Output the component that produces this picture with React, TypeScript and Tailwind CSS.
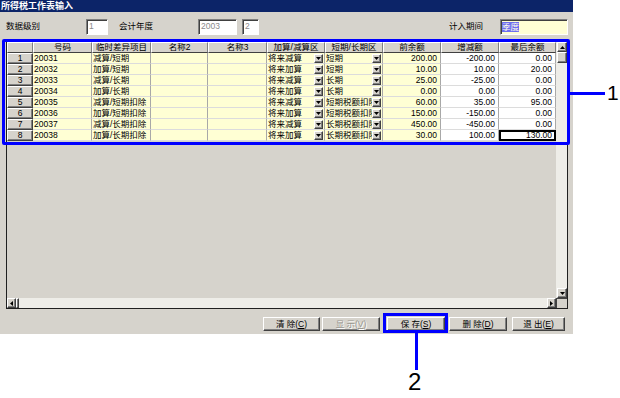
import React from "react";

const FONT = "font-['Liberation_Sans','Noto_Sans_CJK_SC',sans-serif]";
const RAISED =
  "border border-t-white border-l-white border-r-[#404040] border-b-[#404040] shadow-[inset_-1px_-1px_#808080]";
const SUNKEN =
  "border border-t-[#808080] border-l-[#808080] border-r-white border-b-white shadow-[inset_1px_1px_#404040]";

const ROWS: string[][] = [
  ["1", "20031", "减算/短期", "将来减算", "短期", "200.00", "-200.00", "0.00"],
  ["2", "20032", "加算/短期", "将来加算", "短期", "10.00", "10.00", "20.00"],
  ["3", "20033", "减算/长期", "将来减算", "长期", "25.00", "-25.00", "0.00"],
  ["4", "20034", "加算/长期", "将来加算", "长期", "0.00", "0.00", "0.00"],
  ["5", "20035", "减算/短期扣除", "将来减算", "短期税额扣除", "60.00", "35.00", "95.00"],
  ["6", "20036", "加算/短期扣除", "将来加算", "短期税额扣除", "150.00", "-150.00", "0.00"],
  ["7", "20037", "减算/长期扣除", "将来减算", "长期税额扣除", "450.00", "-450.00", "0.00"],
  ["8", "20038", "加算/长期扣除", "将来加算", "长期税额扣除", "30.00", "100.00", "130.00"],
];

const HEADERS = ["", "号码", "临时差异项目", "名称2", "名称3", "加算/减算区", "短期/长期区", "前余额", "增减额", "最后余额"];

const GRID_COLS = "grid grid-cols-[26px_59px_59px_57px_59px_58px_58px_58px_58px_57px]";

function Tri({ dir }: { dir: "up" | "down" | "left" | "right" }) {
  const d =
    dir === "down"
      ? "M0 0H5L2.5 3Z"
      : dir === "up"
      ? "M0 3H5L2.5 0Z"
      : dir === "left"
      ? "M3 0V5L0 2.5Z"
      : "M0 0V5L3 2.5Z";
  const w = dir === "up" || dir === "down" ? 5 : 3;
  const h = dir === "up" || dir === "down" ? 3 : 5;
  return (
    <svg width={w} height={h} viewBox={`0 0 ${w} ${h}`}>
      <path d={d} fill="#000" />
    </svg>
  );
}

function ComboCell({ text }: { text: string }) {
  return (
    <div className="h-[11px] bg-[#ffffd4] border-r border-b border-r-[#a8a8a8] border-b-[#dcdcdc] flex items-center pl-[1px] overflow-hidden">
      <span className="flex-1 min-w-0 overflow-hidden whitespace-nowrap leading-[10px]">{text}</span>
      <div className={`w-[9px] h-[9px] shrink-0 mr-[1px] bg-[#d6d3cc] ${RAISED} flex items-center justify-center`}>
        <Tri dir="down" />
      </div>
    </div>
  );
}

function Btn({ label, hot, disabled, className }: { label: string; hot: string; disabled?: boolean; className?: string }) {
  return (
    <div
      className={`h-[14px] ${RAISED} bg-[#d6d3cc] flex items-center justify-center leading-[10px] whitespace-nowrap ${
        disabled ? "text-[#9a9890] [text-shadow:1px_1px_#ffffff]" : "text-black"
      } ${className ?? ""}`}
    >
      {label}(<span className="underline">{hot}</span>)
    </div>
  );
}

export default function App() {
  return (
    <div className={`w-[620px] h-[398px] bg-white relative overflow-hidden text-[8.5px] text-black ${FONT}`}>
      <div className="w-[573px] h-[334px] bg-[#d6d3cc] flex flex-col">
        {/* title bar */}
        <div className="h-[12px] bg-[#0c2468] text-white font-bold text-[9px] leading-[12px] pl-[1px]">
          所得税工作表输入
        </div>
        {/* form row */}
        <div className="h-[29px] flex items-center">
          <span className="ml-[6px] w-[80px]">数据级别</span>
          <div className={`w-[22px] h-[16px] bg-white ${SUNKEN} text-[#8a8a8a] pl-[2px] leading-[13px]`}>1</div>
          <span className="ml-[11px] w-[79px]">会计年度</span>
          <div className={`w-[39px] h-[16px] bg-white ${SUNKEN} text-[#8a8a8a] pl-[2px] leading-[13px]`}>2003</div>
          <div className={`ml-[5px] w-[17px] h-[16px] bg-white ${SUNKEN} text-[#8a8a8a] pl-[2px] leading-[13px]`}>2</div>
          <span className="ml-[190px] w-[51px]">计入期间</span>
          <div className={`w-[68px] h-[16px] bg-[#ffffd4] ${SUNKEN} pl-[1px] flex items-center`}>
            <span className="bg-[#6e6ef0] text-[#ffffe8] leading-[10px]">季度</span>
          </div>
        </div>
        {/* grid */}
        <div className="ml-[6px] w-[562px] h-[268px] border border-[#202020] flex flex-col bg-[#d6d3cc]">
          <div className="flex flex-1 min-h-0">
            <div className="w-[549px] flex flex-col">
              <div className={GRID_COLS}>
                {HEADERS.map((h, i) => (
                  <div
                    key={i}
                    className="h-[11px] bg-[#d6d3cc] border-t border-l border-r border-b border-t-white border-l-white border-r-[#808080] border-b-[#404040] text-center leading-[9px] whitespace-nowrap overflow-hidden"
                  >
                    {h}
                  </div>
                ))}
                {ROWS.map((r, ri) => (
                  <React.Fragment key={ri}>
                    <div className={`h-[11px] bg-[#d6d3cc] ${RAISED} border-r-[#404040] text-center leading-[9px]`}>{r[0]}</div>
                    <div className="h-[11px] bg-[#ffffd4] border-r border-b border-r-[#a8a8a8] border-b-[#dcdcdc] pl-[1px] leading-[10px]">{r[1]}</div>
                    <div className="h-[11px] bg-[#ffffd4] border-r border-b border-r-[#a8a8a8] border-b-[#dcdcdc] pl-[1px] leading-[10px] whitespace-nowrap overflow-hidden">{r[2]}</div>
                    <div className="h-[11px] bg-[#ffffd4] border-r border-b border-r-[#a8a8a8] border-b-[#dcdcdc]" />
                    <div className="h-[11px] bg-[#ffffd4] border-r border-b border-r-[#a8a8a8] border-b-[#dcdcdc]" />
                    <ComboCell text={r[3]} />
                    <ComboCell text={r[4]} />
                    <div className="h-[11px] bg-[#ffffd4] border-r border-b border-r-[#a8a8a8] border-b-[#dcdcdc] text-right pr-[3px] leading-[10px]">{r[5]}</div>
                    <div className="h-[11px] bg-white border-r border-b border-r-[#a8a8a8] border-b-[#dcdcdc] text-right pr-[3px] leading-[10px]">{r[6]}</div>
                    {ri === 7 ? (
                      <div className="h-[11px] bg-white border-2 border-black text-right pr-[2px] leading-[7px]">{r[7]}</div>
                    ) : (
                      <div className="h-[11px] bg-white border-r border-b border-r-[#a8a8a8] border-b-[#dcdcdc] text-right pr-[3px] leading-[10px]">{r[7]}</div>
                    )}
                  </React.Fragment>
                ))}
              </div>
            </div>
            {/* vertical scrollbar */}
            <div className="w-[11px] bg-[#eeede8] flex flex-col pl-[1px]">
              <div className={`w-[10px] h-[10px] bg-[#d6d3cc] ${RAISED} flex items-center justify-center`}>
                <Tri dir="up" />
              </div>
              <div className={`w-[10px] h-[11px] bg-[#d6d3cc] ${RAISED}`} />
              <div className="flex-1" />
              <div className={`w-[10px] h-[10px] bg-[#d6d3cc] ${RAISED} flex items-center justify-center`}>
                <Tri dir="down" />
              </div>
            </div>
          </div>
          {/* horizontal scrollbar */}
          <div className="h-[10px] flex">
            <div className="flex-1 bg-[#eeede8] flex">
              <div className={`w-[9px] h-[10px] bg-[#d6d3cc] ${RAISED} flex items-center justify-center`}>
                <Tri dir="left" />
              </div>
              <div className={`w-[3px] h-[10px] bg-[#d6d3cc] ${RAISED}`} />
              <div className="flex-1" />
              <div className={`w-[9px] h-[10px] bg-[#d6d3cc] ${RAISED} flex items-center justify-center`}>
                <Tri dir="right" />
              </div>
            </div>
            <div className="w-[11px] h-[10px] bg-[#d6d3cc] border-l border-t border-[#404040]" />
          </div>
        </div>
        {/* buttons */}
        <div className="mt-[8px] flex">
          <Btn label="清 除" hot="C" className="ml-[263px] w-[57px]" />
          <Btn label="显 示" hot="V" disabled className="ml-[2px] w-[58px]" />
          <Btn label="保 存" hot="S" className="ml-[7px] w-[58px]" />
          <Btn label="删 除" hot="D" className="ml-[4px] w-[58px]" />
          <Btn label="退 出" hot="E" className="ml-[5px] w-[53px]" />
        </div>
      </div>

      {/* annotations */}
      <div className="absolute left-[2px] top-[39px] w-[568px] h-[106px] border-[3px] border-[#0000ff] rounded-[2px]" />
      <div className="absolute left-[570px] top-[92px] w-[35px] h-[3px] bg-[#0000ff]" />
      <div className="absolute left-[607px] top-[80px] text-[21px] leading-[26px] font-['Liberation_Sans',sans-serif]">1</div>
      <div className="absolute left-[383px] top-[313px] w-[65px] h-[20px] border-[3px] border-[#0000ff]" />
      <div className="absolute left-[415px] top-[333px] w-[3px] h-[37px] bg-[#0000ff]" />
      <div className="absolute left-[408px] top-[368px] text-[24px] leading-[28px] font-['Liberation_Sans',sans-serif]">2</div>
    </div>
  );
}
